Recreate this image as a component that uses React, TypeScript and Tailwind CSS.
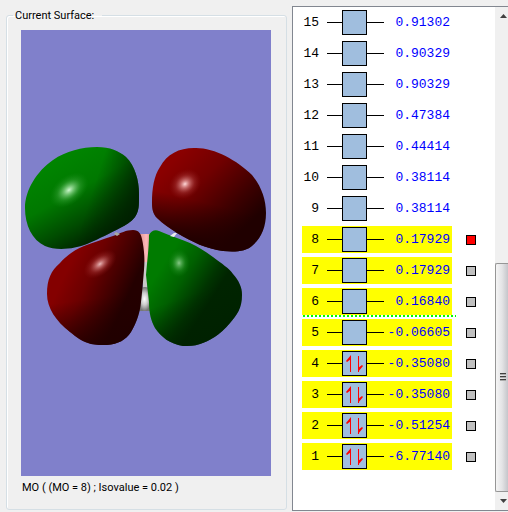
import React, { useState } from "react";

type Orbital = { n: number; energy: string; listed?: boolean; filled?: boolean };

const orbitals: Orbital[] = [
  { n: 15, energy: "0.91302" },
  { n: 14, energy: "0.90329" },
  { n: 13, energy: "0.90329" },
  { n: 12, energy: "0.47384" },
  { n: 11, energy: "0.44414" },
  { n: 10, energy: "0.38114" },
  { n: 9, energy: "0.38114" },
  { n: 8, energy: "0.17929", listed: true },
  { n: 7, energy: "0.17929", listed: true },
  { n: 6, energy: "0.16840", listed: true },
  { n: 5, energy: "-0.06605", listed: true },
  { n: 4, energy: "-0.35080", listed: true, filled: true },
  { n: 3, energy: "-0.35080", listed: true, filled: true },
  { n: 2, energy: "-0.51254", listed: true, filled: true },
  { n: 1, energy: "-6.77140", listed: true, filled: true },
];

function Surface() {
  return (
    <svg viewBox="21 30 250 446" className="block w-full" role="img" aria-label="Molecular orbital surface">
      <defs>
        <linearGradient id="g1" gradientUnits="userSpaceOnUse" x1="60" y1="160" x2="108" y2="246">
          <stop offset="0" stopColor="#008400" />
          <stop offset=".35" stopColor="#007800" />
          <stop offset=".65" stopColor="#004c00" />
          <stop offset=".88" stopColor="#002600" />
          <stop offset="1" stopColor="#002000" />
        </linearGradient>
        <linearGradient id="g1edge" gradientUnits="userSpaceOnUse" x1="96" y1="180" x2="139" y2="194">
          <stop offset="0" stopColor="#002000" stopOpacity="0" />
          <stop offset="1" stopColor="#002000" stopOpacity=".9" />
        </linearGradient>
        <linearGradient id="r1" gradientUnits="userSpaceOnUse" x1="168" y1="166" x2="236" y2="236">
          <stop offset="0" stopColor="#8a0000" />
          <stop offset=".35" stopColor="#700000" />
          <stop offset=".75" stopColor="#3c0000" />
          <stop offset="1" stopColor="#200000" />
        </linearGradient>
        <linearGradient id="r1low" gradientUnits="userSpaceOnUse" x1="195" y1="200" x2="186" y2="237">
          <stop offset="0" stopColor="#200000" stopOpacity="0" />
          <stop offset="1" stopColor="#200000" stopOpacity=".9" />
        </linearGradient>
        <linearGradient id="r2" gradientUnits="userSpaceOnUse" x1="67" y1="270" x2="127" y2="298">
          <stop offset="0" stopColor="#840000" />
          <stop offset=".35" stopColor="#6c0000" />
          <stop offset=".75" stopColor="#400000" />
          <stop offset="1" stopColor="#240000" />
        </linearGradient>
        <linearGradient id="r2low" gradientUnits="userSpaceOnUse" x1="90" y1="299" x2="96" y2="344">
          <stop offset="0" stopColor="#200000" stopOpacity="0" />
          <stop offset="1" stopColor="#200000" stopOpacity=".8" />
        </linearGradient>
        <linearGradient id="g2" gradientUnits="userSpaceOnUse" x1="161" y1="268" x2="211" y2="300">
          <stop offset="0" stopColor="#007b00" />
          <stop offset=".4" stopColor="#006000" />
          <stop offset=".8" stopColor="#003400" />
          <stop offset="1" stopColor="#002400" />
        </linearGradient>
        <linearGradient id="g2low" gradientUnits="userSpaceOnUse" x1="175" y1="300" x2="190" y2="344">
          <stop offset="0" stopColor="#002000" stopOpacity="0" />
          <stop offset="1" stopColor="#002000" stopOpacity=".7" />
        </linearGradient>
        <radialGradient id="gh">
          <stop offset="0" stopColor="#d0f8d0" />
          <stop offset=".25" stopColor="#83d083" stopOpacity=".85" />
          <stop offset=".6" stopColor="#35a035" stopOpacity=".5" />
          <stop offset="1" stopColor="#148814" stopOpacity="0" />
        </radialGradient>
        <radialGradient id="rh">
          <stop offset="0" stopColor="#ffd8d8" />
          <stop offset=".25" stopColor="#d88383" stopOpacity=".85" />
          <stop offset=".6" stopColor="#a53535" stopOpacity=".5" />
          <stop offset="1" stopColor="#8a1414" stopOpacity="0" />
        </radialGradient>
        <linearGradient id="pink">
          <stop offset="0" stopColor="#d88f8f" />
          <stop offset=".6" stopColor="#ffb9b9" />
          <stop offset="1" stopColor="#d69595" />
        </linearGradient>
        <radialGradient id="white">
          <stop offset="0" stopColor="#fff" />
          <stop offset=".5" stopColor="#ccc" />
          <stop offset="1" stopColor="#777" />
        </radialGradient>
        <path id="lobeG1" d="M25 208C25 190 37 171 53 160C66 151 82 147 97 147C110 147 119 151 126 157C135 166 139 180 139 194C139 206 139 211 135 217C131 222 126 225 120 228C110 233 101 238 87 244C75 249 56 251 45 246C32 240 25 225 25 208Z" />
        <path id="lobeR1" d="M152 203C152 188 154 176 160 167C167 154 179 148 194 148C213 147 237 160 252 175C261 186 266 199 266 213C266 227 261 238 253 245C246 252 234 252 223 251C207 249 192 242 177 233C170 228 163 224 157 218C153 214 152 209 152 203Z" />
        <path id="lobeR2" d="M47 294C47 279 51 271 60 263C68 254 75 250 84 246C94 242 104 239 113 236C121 233 126 230 133 230C139 230 141 234 142 239C144 248 145 258 144 270C143 282 142 293 141 302C140 312 137 322 131 332C126 340 118 344 107 345C102 345 96 345 91 344C83 342 76 337 70 332C56 321 47 308 47 294Z" />
        <path id="lobeG2" d="M149 235C151 231 155 229 159 231C171 236 181 239 190 243C199 247 206 252 213 257C222 264 229 268 233 274C239 281 242 287 242 295C242 308 237 315 230 323C220 335 209 341 200 344C194 346 189 346 183 346C170 344 161 337 155 328C151 321 149 313 149 302C148 293 147 284 146 275C147 262 149 248 149 235Z" />
      </defs>
      <rect x="21" y="30" width="250" height="446" fill="#8080cb" />
      <path d="M139 234h12v33h-12z" fill="url(#pink)" />
      <path d="M143 262h4v30h-4z" fill="#c9c9c9" />
      <path d="M138 290c4-4 10-4 13 0v21h-13z" fill="url(#white)" />
      <use href="#lobeG1" fill="url(#g1)" />
      <use href="#lobeG1" fill="url(#g1edge)" />
      <use href="#lobeR1" fill="url(#r1)" />
      <use href="#lobeR1" fill="url(#r1low)" />
      <use href="#lobeR2" fill="url(#r2)" />
      <use href="#lobeR2" fill="url(#r2low)" />
      <use href="#lobeG2" fill="url(#g2)" />
      <use href="#lobeG2" fill="url(#g2low)" />
      <path d="M114 234L116 232L120 234L117 236Z" fill="#a9a9a0" />
      <path d="M170 236L174 233L177 233L174 237Z" fill="#eee" />
      <ellipse cx="69" cy="190" rx="22" ry="14" fill="url(#gh)" transform="rotate(-38 69 190)" />
      <ellipse cx="185" cy="184" rx="17" ry="14" fill="url(#rh)" transform="rotate(-35 185 184)" />
      <ellipse cx="100" cy="264" rx="19" ry="11" fill="url(#rh)" opacity=".85" transform="rotate(-38 100 264)" />
      <ellipse cx="179" cy="263" rx="11" ry="14" fill="url(#gh)" opacity=".65" />
    </svg>
  );
}

function OrbitalBox({ filled }: { filled?: boolean }) {
  return (
    <span className="flex items-center">
      <span className="h-px w-[15px] bg-black" />
      <span className="flex size-[25px] items-center justify-center border border-black bg-[#a0bede]">
        {filled && (
          <svg viewBox="0 0 23 23" className="size-[23px]" aria-hidden="true">
            <path d="M7.500 20V4M15.500 4V20" fill="none" stroke="#f00" />
            <path d="M8 3V7L4 10L3 9ZM15 20V16L19 13L20 14Z" fill="#f00" />
          </svg>
        )}
      </span>
      <span className="h-px w-[17px] bg-black" />
    </span>
  );
}

function ScrollBar() {
  return (
    <div className="flex w-[13px] shrink-0 flex-col bg-[#f0f0f0]">
      <button aria-label="Scroll up" className="flex h-[18px] shrink-0 items-center justify-center">
        <svg viewBox="0 0 7 4" className="ml-1 h-1 w-[7px]"><path d="M0 4L3.5 0L7 4Z" fill="#404040" /></svg>
      </button>
      <div className="flex-[239]" />
      <div className="flex flex-[228] flex-col items-end justify-center gap-px rounded-l-xs border-y border-l border-[#969696] bg-linear-to-r from-[#f5f5f5] via-[#e4e4e6] to-[#c5c5ca] pr-0.5">
        <span className="h-0.5 w-1.5 border-t border-[#404040] bg-[#aaa]" />
        <span className="h-0.5 w-1.5 border-t border-[#404040] bg-[#aaa]" />
        <span className="h-0.5 w-1.5 border-t border-[#404040] bg-[#aaa]" />
      </div>
      <button aria-label="Scroll down" className="flex h-[18px] shrink-0 items-center justify-center">
        <svg viewBox="0 0 7 4" className="ml-1 h-1 w-[7px]"><path d="M0 0L3.5 4L7 0Z" fill="#404040" /></svg>
      </button>
    </div>
  );
}

export default function App() {
  const [selected, setSelected] = useState(8);
  return (
    <main className="flex min-h-screen gap-[5px] bg-[#f0f0f0] pl-1.5 pt-1.5 pb-px font-[Roboto,Tahoma,sans-serif] text-[11px] leading-4 text-black">
      <fieldset className="mb-px min-w-0 flex-1 rounded-[3px] border border-[#d5dfe5] pr-[15px] pl-3.5 shadow-[inset_1px_1px_0_#fff]">
        <legend className="-ml-2 px-0.5 pt-0.5 pr-2">Current Surface:</legend>
        <div className="pt-1.5">
          <Surface />
        </div>
        <p className="pt-1 pl-px whitespace-nowrap">MO ( (MO = 8) ; Isovalue = 0.02 )</p>
      </fieldset>
      <section aria-label="Orbital energies" className="flex w-[216px] shrink-0 border-y border-l border-[#828790] bg-white">
        <ul className="grow space-y-1 pt-0.5 pl-[9px] font-['Liberation_Mono','Courier_New',monospace] text-[13px]">
          {orbitals.map((o) => (
            <li key={o.n} className="relative">
              <label className="flex items-center gap-3.5">
                <span className={"flex h-[27px] w-[150px] items-center " + (o.listed ? "bg-[#ffff00]" : "")}>
                  <span className="w-[17px] text-right">{o.n}</span>
                  <span className="pl-2">
                    <OrbitalBox filled={o.filled} />
                  </span>
                  <span className="flex-1 pr-0.5 text-right text-[#0000ff]">{o.energy}</span>
                </span>
                {o.listed && (
                  <input
                    type="checkbox"
                    checked={selected === o.n}
                    onChange={() => setSelected(o.n)}
                    className="size-2.5 appearance-none border border-black bg-[#c0c0c0] checked:bg-[#ff0000]"
                  />
                )}
              </label>
              {o.n === 6 && (
                <span className="absolute -bottom-0.5 left-px h-0.5 w-[153px] bg-[repeating-linear-gradient(90deg,#00ff00_0_2px,transparent_2px_4px)]" />
              )}
            </li>
          ))}
        </ul>
        <ScrollBar />
      </section>
    </main>
  );
}
